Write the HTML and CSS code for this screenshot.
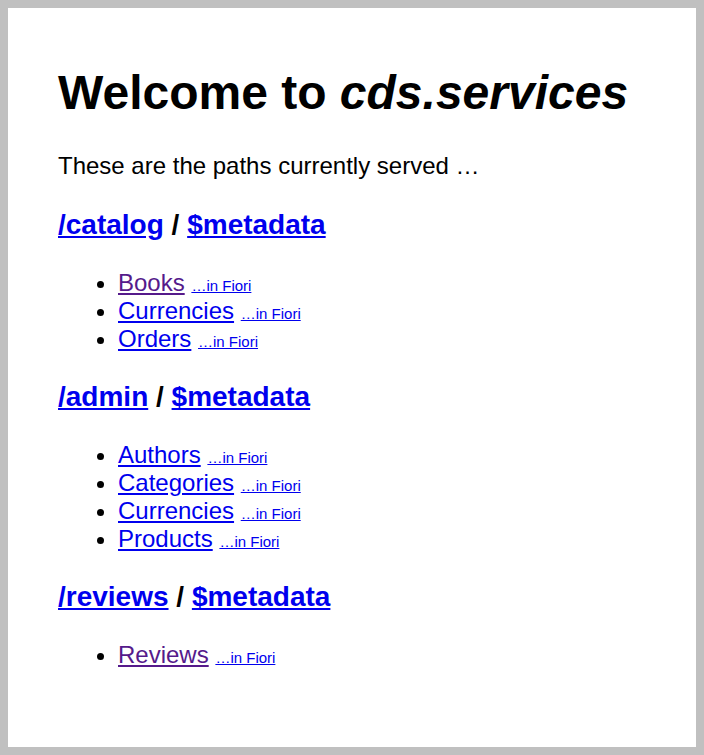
FILE: index.html
```
<!DOCTYPE html>
<html>
<head>
<meta charset="utf-8">
<title>Welcome to cds.services</title>
<link rel="stylesheet" href="styles.css">
</head>
<body>
<h1>Welcome to <i>cds.services</i></h1>
<p>These are the paths currently served …</p>

<h2><a href="#catalog">/catalog</a> / <a href="#catalog-meta">$metadata</a></h2>
<ul>
  <li><a class="visited" href="#books">Books</a> <a class="fiori" href="#f1">…in Fiori</a></li>
  <li><a href="#currencies">Currencies</a> <a class="fiori" href="#f2">…in Fiori</a></li>
  <li><a href="#orders">Orders</a> <a class="fiori" href="#f3">…in Fiori</a></li>
</ul>

<h2><a href="#admin">/admin</a> / <a href="#admin-meta">$metadata</a></h2>
<ul>
  <li><a href="#authors">Authors</a> <a class="fiori" href="#f4">…in Fiori</a></li>
  <li><a href="#categories">Categories</a> <a class="fiori" href="#f5">…in Fiori</a></li>
  <li><a href="#acurrencies">Currencies</a> <a class="fiori" href="#f6">…in Fiori</a></li>
  <li><a href="#products">Products</a> <a class="fiori" href="#f7">…in Fiori</a></li>
</ul>

<h2><a href="#reviews">/reviews</a> / <a href="#reviews-meta">$metadata</a></h2>
<ul>
  <li><a class="visited" href="#rev">Reviews</a> <a class="fiori" href="#f8">…in Fiori</a></li>
</ul>
</body>
</html>
```
FILE: styles.css
```
html {
  background: #c0c0c0;
}
body {
  margin: 8px;
  padding: 57px 50px 1px;
  min-height: calc(100vh - 74px);
  background: #fff;
  font-family: "Liberation Sans", Arial, sans-serif;
  font-size: 24px;
  color: #000;
}
h1 {
  font-size: 48px;
  font-weight: bold;
  margin: 0 0 32px;
}
p {
  margin: 0 0 29px;
}
h2 {
  font-size: 28px;
  font-weight: bold;
  margin: 0;
}
ul {
  margin: 28px 0 28px;
  padding-left: 60px;
}
a {
  color: #0000ee;
}
a.visited {
  color: #551a8b;
}
a.fiori {
  font-size: 15px;
}
```
